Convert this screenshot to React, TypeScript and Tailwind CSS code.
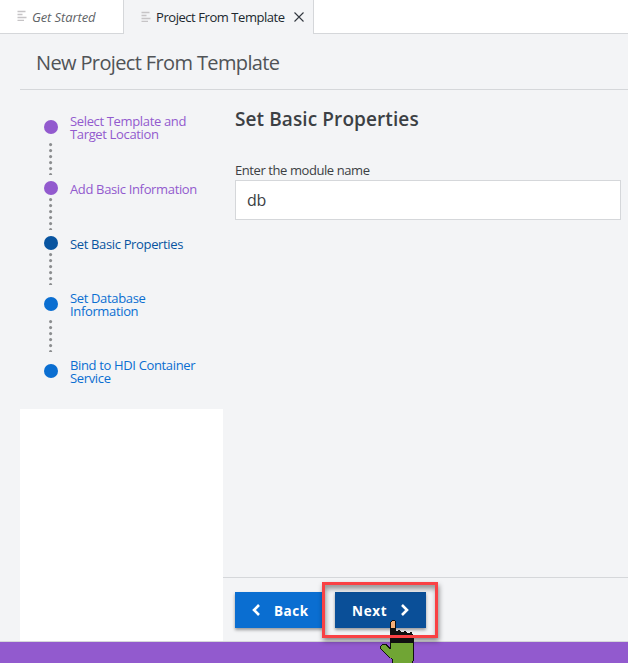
import React from "react";

const steps = [
  { lines: ["Select Template and", "Target Location"], height: "h-[61px]", dot: "bg-[#925ace]", text: "text-[#925ace]", gap: "pt-[9px]" },
  { lines: ["Add Basic Information"], height: "h-[55px]", dot: "bg-[#925ace]", text: "text-[#925ace]", gap: "pt-[3px]" },
  { lines: ["Set Basic Properties"], height: "h-[61px]", dot: "bg-[#0854a0]", text: "text-[#0854a0]", gap: "pt-[3px]" },
  { lines: ["Set Database", "Information"], height: "h-[67px]", dot: "bg-[#0a6ed1]", text: "text-[#0a6ed1]", gap: "pt-[9px]" },
  { lines: ["Bind to HDI Container", "Service"], height: "h-[45px]", dot: "bg-[#0a6ed1]", text: "text-[#0a6ed1]", gap: "" },
];

function Lines() {
  return (
    <svg width="10" height="11" viewBox="0 0 10 11" fill="none" stroke="#c6c4c6" strokeWidth="1.3" className="mb-[2px] shrink-0">
      <path d="M0.5 1.5H8.5M0.5 4.5H5.5M0.5 7.5H9.5M0.5 10.3H7" />
    </svg>
  );
}

function Dots() {
  return (
    <svg width="4" height="32" viewBox="0 0 4 32" fill="#8b8d8f">
      {[1.6, 7.6, 13.6, 19.6, 25.6, 31.6].map((y) => (
        <circle key={y} cx="1.6" cy={y} r="1.55" />
      ))}
    </svg>
  );
}

function Hand() {
  return (
    <svg className="absolute left-[379px] top-[620px]" width="37" height="43" viewBox="0 0 37 43" shapeRendering="crispEdges">
      <path d="M13 43V39L9 37L5 33L1 28V26L3 24H7L11 28V2L12 1L13 0H15L17 2V11H18L19 10H21L22 12H24L25 11H27L28 13H30L31 12H33L34 15L35 16V39L34 43Z" fill="#101010" />
      <path d="M12 8V2L13 1H15L16 2V8Z" fill="#f6b078" />
      <path d="M14 43V39L9 36L5 32L2 28V26L4 25H6L11 29H12V23H34V39L33 43Z" fill="#70a534" />
      <path d="M0 15H37V18H0Z" fill="#f94144" />
    </svg>
  );
}

export default function App() {
  return (
    <div className="relative flex h-[663px] w-[628px] flex-col overflow-hidden bg-[#f3f4f6] font-['Open_Sans','Noto_Sans',sans-serif] text-[13px] text-[#3c4044]">
      <nav className="flex h-[34px] shrink-0 whitespace-nowrap">
        <div className="flex w-[124px] items-center border-r border-b border-[#d5d7da] bg-white pl-[17px] italic text-[#5f6468]">
          <Lines />
          <span className="ml-[5px] pt-[2px] tracking-[-0.1px]">Get Started</span>
        </div>
        <div className="flex w-[190px] items-center border-r border-[#d5d7da] pl-[17px] text-[#20282f]">
          <Lines />
          <span className="ml-[5px] w-[138px] pt-px tracking-[-0.44px]">Project From Template</span>
          <svg width="10" height="10" viewBox="0 0 10 10" stroke="#333840" strokeWidth="1.1"><path d="M.5.5l9 9M9.5.5l-9 9" /></svg>
        </div>
        <div className="flex-1 border-b border-[#d5d7da] bg-white" />
      </nav>
      <header className="ml-5 flex h-14 shrink-0 items-center border-b border-[#d5d7da] pl-4 pt-[2px]">
        <h1 className="whitespace-nowrap text-[20px] tracking-[-0.63px] text-[#505357]">New Project From Template</h1>
      </header>
      <div className="flex h-[551px] shrink-0">
        <aside className="ml-5 flex w-[203px] flex-col">
          <div className="h-[319px] shrink-0 pt-[30px]">
            {steps.map((s, i) => (
              <div key={i} className={`flex ${s.height}`}>
                <div className="flex w-[50px] flex-col items-start pl-6">
                  <div className={`h-[14px] w-[14px] shrink-0 rounded-full ${s.dot}`} />
                  {i < steps.length - 1 && <div className={`ml-[5px] ${s.gap}`}><Dots /></div>}
                </div>
                <div className={`whitespace-nowrap leading-[13px] tracking-[-0.35px] ${s.text} ${s.lines.length === 2 ? "-mt-[5px]" : "mt-[2px]"}`}>
                  {s.lines[0]}
                  {s.lines[1] && <><br />{s.lines[1]}</>}
                </div>
              </div>
            ))}
          </div>
          <div className="flex-1 bg-white" />
        </aside>
        <main className="flex flex-1 flex-col">
          <section className="flex-1 pl-3 pr-[7px] pt-[17px]">
            <h2 className="whitespace-nowrap text-[19px] font-semibold leading-6 tracking-[0.1px]">Set Basic Properties</h2>
            <label className="mt-[30px] block h-[19px] text-[13px] leading-[18px] tracking-[-0.42px]">Enter the module name</label>
            <div className="flex h-10 items-center border border-[#d5d7da] bg-white pl-[11px] text-[16px] tracking-[-0.4px]">db</div>
          </section>
          <footer className="flex h-[64px] border-t border-[#d5d7da] pl-3 pt-[14px] text-[13.5px] font-bold text-white">
            <button className="flex h-9 w-[88px] items-center bg-[#0a6ed1] pl-[17px] shadow-[0_2px_3px_#00000060]">
              <svg width="8" height="12" viewBox="0 0 8 12" fill="none" stroke="white" strokeWidth="2.6"><path d="M7 1L2 6L7 11" /></svg>
              <span className="ml-[14px] pt-[3px] tracking-[0.5px]">Back</span>
            </button>
            <button className="ml-3 flex h-9 w-[91px] items-center bg-[#0a4f98] pl-[17px] shadow-[0_2px_3px_#00000060]">
              <span className="w-[48px] pt-[3px] text-left tracking-[0.7px]">Next</span>
              <svg width="9" height="12" viewBox="0 0 9 12" fill="none" stroke="white" strokeWidth="2.6"><path d="M2 1L7 6L2 11" /></svg>
            </button>
          </footer>
        </main>
      </div>
      <div className="h-[22px] shrink-0 border-t border-[#d5d7da] bg-[#925ace]" />
      <div className="absolute left-[322px] top-[582px] h-[56px] w-[116px] border-[3px] border-[#f94144] shadow-[1px_3px_5px_#00000070,inset_1px_4px_5px_#00000060]" />
      <Hand />
    </div>
  );
}
